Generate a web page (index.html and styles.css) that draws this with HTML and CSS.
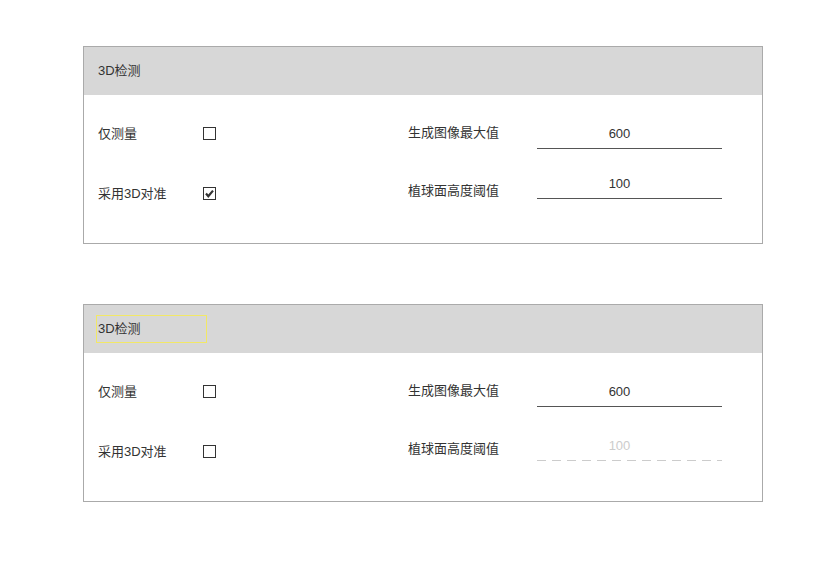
FILE: index.html
```html
<!DOCTYPE html>
<html>
  <head>
  <meta charset="utf-8">
  <title>3D检测</title>
  <link rel="stylesheet" href="styles.css">
  </head>
  <body>
    <div class="pagina">

      <!-- panel 1 -->
      <div class="panel">
        <div class="panel-cab"><span class="titulo">3D检测</span></div>
        <div class="panel-cuerpo">
          <div class="col-izq">
            <div class="fila">
              <span class="etiqueta">仅测量</span>
              <span class="check"></span>
            </div>
            <div class="fila">
              <span class="etiqueta">采用3D对准</span>
              <span class="check marcado">
                <svg width="11" height="11" viewBox="0 0 11 11"><path d="M2 5.6 L4.3 8.2 L9 2.6" fill="none" stroke="#333" stroke-width="2.2"/></svg>
              </span>
            </div>
          </div>
          <div class="col-der">
            <div class="fila fila-1">
              <span class="etiqueta-der">生成图像最大值</span>
              <input class="campo" type="text" value="600">
            </div>
            <div class="fila fila-2">
              <span class="etiqueta-der">植球面高度阈值</span>
              <input class="campo" type="text" value="100">
            </div>
          </div>
        </div>
      </div>

      <!-- panel 2 -->
      <div class="panel">
        <div class="panel-cab"><span class="titulo foco">3D检测</span></div>
        <div class="panel-cuerpo">
          <div class="col-izq">
            <div class="fila">
              <span class="etiqueta">仅测量</span>
              <span class="check"></span>
            </div>
            <div class="fila">
              <span class="etiqueta">采用3D对准</span>
              <span class="check"></span>
            </div>
          </div>
          <div class="col-der">
            <div class="fila fila-1">
              <span class="etiqueta-der">生成图像最大值</span>
              <input class="campo" type="text" value="600">
            </div>
            <div class="fila fila-2b">
              <span class="etiqueta-der">植球面高度阈值</span>
              <input class="campo desactivado" type="text" value="100" disabled>
            </div>
          </div>
        </div>
      </div>

    </div>
  </body>
</html>
```

FILE: styles.css
```css
body {
  margin: 0;
  background-color: white;
  font-family: "Liberation Sans", "Noto Sans CJK SC", sans-serif;
  font-size: 13px;
  color: #333;
}

.pagina {
  padding: 46px 0 0 83px;
  display: flex;
  flex-direction: column;
  gap: 60px;
}

.panel {
  width: 680px;
  box-sizing: border-box;
  border: 1px solid #aaaaaa;
}

.panel-cab {
  height: 48px;
  background-color: #d7d7d7;
  padding-left: 14px;
  display: flex;
  align-items: center;
}

.titulo {
  line-height: 17px;
  margin-top: -2px;
}

.titulo.foco {
  box-sizing: border-box;
  width: 111px;
  height: 28px;
  margin-top: 0;
  margin-left: -2px;
  padding: 0 0 2px 1px;
  border: 1px solid #f2e866;
  display: flex;
  align-items: center;
}

.panel-cuerpo {
  display: grid;
  grid-template-columns: 310px 1fr;
  padding: 23px 0 35px 14px;
}

.col-izq, .col-der {
  display: flex;
  flex-direction: column;
  gap: 30px;
}

.fila {
  height: 30px;
  display: flex;
  align-items: center;
}

.etiqueta {
  width: 105px;
  line-height: 17px;
}

.check {
  width: 13px;
  height: 13px;
  box-sizing: border-box;
  border: 1px solid #333;
  display: flex;
  align-items: center;
  justify-content: center;
}

.check svg { display: block; }

.col-der .fila {
  align-items: flex-start;
}

.etiqueta-der {
  width: 129px;
  line-height: 17px;
}

.campo {
  width: 185px;
  height: 26px;
  box-sizing: border-box;
  padding: 0 20px 5px 0;
  margin: 0;
  border: none;
  border-bottom: 1px solid #555;
  background: transparent;
  font-family: "Liberation Sans", sans-serif;
  font-size: 13px;
  color: #333;
  text-align: center;
  outline: none;
}

.fila-1 .etiqueta-der { margin-top: 6px; }
.fila-1 .campo { margin-top: 5px; }

.fila-2 .etiqueta-der { margin-top: 4px; }
.fila-2 .campo { margin-top: -5px; }

.fila-2b .etiqueta-der { margin-top: 4px; }
.fila-2b .campo { margin-top: -1px; }

.campo.desactivado {
  color: #cccccc;
  border-bottom: none;
  background-image: repeating-linear-gradient(to right, #cccccc 0 9px, transparent 9px 15px);
  background-size: 100% 1px;
  background-position: bottom;
  background-repeat: no-repeat;
}
```
